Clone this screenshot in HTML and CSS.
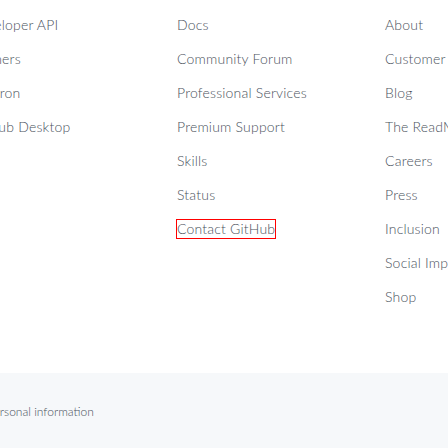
FILE: index.html
```html
<!DOCTYPE html>
<html lang="en">
<head>
<meta charset="utf-8">
<link rel="stylesheet" href="styles.css">
</head>
<body>
<footer class="footer">
  <div class="links">
    <ul class="col">
      <li><a href="#">Developer API</a></li>
      <li><a href="#">Partners</a></li>
      <li><a href="#">Electron</a></li>
      <li><a href="#">GitHub Desktop</a></li>
    </ul>
    <ul class="col">
      <li><a href="#">Docs</a></li>
      <li><a href="#">Community Forum</a></li>
      <li><a href="#">Professional Services</a></li>
      <li><a href="#">Premium Support</a></li>
      <li><a href="#">Skills</a></li>
      <li><a href="#">Status</a></li>
      <li><a href="#" class="focused">Contact GitHub</a></li>
    </ul>
    <ul class="col">
      <li><a href="#">About</a></li>
      <li><a href="#">Customer stories</a></li>
      <li><a href="#">Blog</a></li>
      <li><a href="#">The ReadME Project</a></li>
      <li><a href="#">Careers</a></li>
      <li><a href="#">Press</a></li>
      <li><a href="#">Inclusion</a></li>
      <li><a href="#">Social Impact</a></li>
      <li><a href="#">Shop</a></li>
    </ul>
  </div>
  <div class="bottom">
    <a href="#" class="small">Do not share my personal information</a>
  </div>
</footer>
</body>
</html>
```
FILE: styles.css
```css
html, body {
  margin: 0;
  padding: 0;
  overflow: hidden;
  background: #ffffff;
}
body {
  width: 448px;
  height: 448px;
  font-family: Lato, "Noto Sans", sans-serif;
  font-weight: 300;
}
.footer {
  display: flex;
  flex-direction: column;
  height: 448px;
}
.links {
  display: grid;
  grid-template-columns: 208px 208px 208px;
  margin-left: -31px;
  padding-top: 15px;
  height: 373px;
  box-sizing: border-box;
}
.col {
  list-style: none;
  margin: 0;
  padding: 0;
  white-space: nowrap;
}
.col li {
  height: 20px;
  line-height: 20px;
  margin-bottom: 14px;
  font-size: 14px;
  letter-spacing: 0.2px;
}
.col a {
  color: #4a525c;
  text-decoration: none;
}
.focused {
  display: inline-block;
  line-height: 18px;
  outline: 1px solid #ff0000;
}
.bottom {
  flex: 1;
  background: #f6f8fa;
  padding: 27px 0 0 0;
  margin-left: -102px;
  white-space: nowrap;
}
.small {
  font-size: 12px;
  color: #4a525c;
  text-decoration: none;
  line-height: 16px;
}
```
